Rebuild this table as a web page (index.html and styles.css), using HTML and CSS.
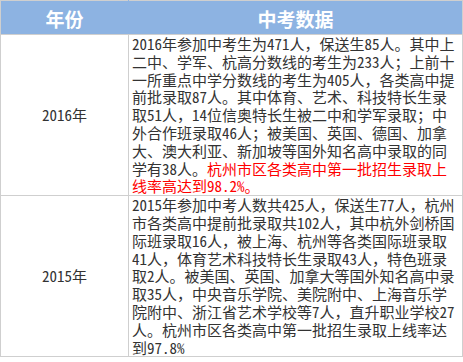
FILE: index.html
```html
<!DOCTYPE html>
<html lang="zh-CN">
<head>
<meta charset="utf-8">
<title>中考数据</title>
<link rel="stylesheet" href="styles.css">
</head>
<body>
<table class="data">
  <colgroup>
    <col class="col-year">
    <col class="col-info">
  </colgroup>
  <thead>
    <tr>
      <th class="h-year">年份</th>
      <th class="h-info">中考数据</th>
    </tr>
  </thead>
  <tbody>
    <tr>
      <td class="year"><span class="n">2016</span>年</td>
      <td class="info"><span class="n">2016</span>年参加中考生为<span class="n">471</span>人，保送生<span class="n">85</span>人。其中上<br>二中、学军、杭高分数线的考生为<span class="n">233</span>人；上前十<br>一所重点中学分数线的考生为<span class="n">405</span>人，各类高中提<br>前批录取<span class="n">87</span>人。其中体育、艺术、科技特长生录<br>取<span class="n">51</span>人，<span class="n">14</span>位信奥特长生被二中和学军录取；中<br>外合作班录取<span class="n">46</span>人；被美国、英国、德国、加拿<br>大、澳大利亚、新加坡等国外知名高中录取的同<br>学有<span class="n">38</span>人。<span class="hl">杭州市区各类高中第一批招生录取上</span><br><span class="hl">线率高达到<span class="n">98.2%</span>。</span></td>
    </tr>
    <tr>
      <td class="year"><span class="n">2015</span>年</td>
      <td class="info"><span class="n">2015</span>年参加中考人数共<span class="n">425</span>人，保送生<span class="n">77</span>人，杭州<br>市各类高中提前批录取共<span class="n">102</span>人，其中杭外剑桥国<br>际班录取<span class="n">16</span>人，被上海、杭州等各类国际班录取<br><span class="n">41</span>人，体育艺术科技特长生录取<span class="n">43</span>人，特色班录<br>取<span class="n">2</span>人。被美国、英国、加拿大等国外知名高中录<br>取<span class="n">35</span>人，中央音乐学院、美院附中、上海音乐学<br>院附中、浙江省艺术学校等<span class="n">7</span>人，直升职业学校<span class="n">27</span><br>人。杭州市区各类高中第一批招生录取上线率达<br>到<span class="n">97.8%</span></td>
    </tr>
  </tbody>
</table>
</body>
</html>
```

FILE: styles.css
```css
html, body {
  margin: 0;
  padding: 0;
  background: #ffffff;
}

.data {
  border-collapse: collapse;
  width: 462px;
  table-layout: fixed;
  font-family: "Noto Sans CJK SC", "Noto Sans", sans-serif;
  color: #333333;
}

.col-year { width: 128px; }
.col-info { width: 334px; }

.data th,
.data td {
  border: 1px solid #cfcfcf;
}

.data th {
  background: #8db3e2;
  color: #ffffff;
  font-size: 19px;
  font-weight: bold;
  height: 34px;
  padding: 2px 0 0;
  box-sizing: border-box;
  text-align: center;
  vertical-align: middle;
}

.data .h-year { border-right-color: #8db3e2; }
.data .h-info { border-left-color: #8db3e2; }

.data td {
  font-size: 15px;
  line-height: 17.8px;
  vertical-align: middle;
}

.n {
  display: inline-block;
  font-feature-settings: "hwid" 1;
}

.year {
  text-align: center;
  padding: 0;
}

.info {
  text-align: left;
  white-space: nowrap;
  padding: 0 2px 0 3px;
}

.hl {
  display: inline-block;
  color: #ff0000;
}
```
